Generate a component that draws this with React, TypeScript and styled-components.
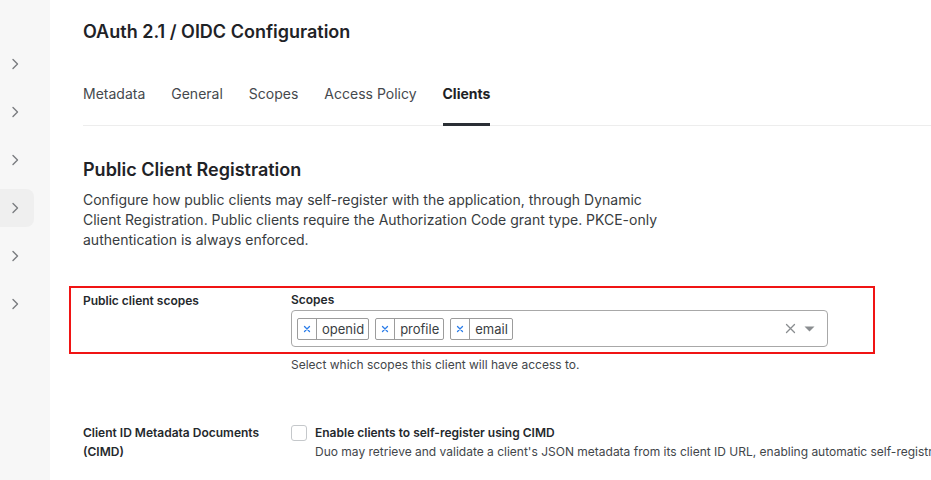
import styled, { createGlobalStyle } from "styled-components";

const GlobalStyle = createGlobalStyle`
  html, body {
    margin: 0;
    padding: 0;
    background: #ffffff;
  }
  body {
    font-family: Inter, "Noto Sans", "Liberation Sans", sans-serif;
    color: #2b2f33;
    overflow: hidden;
  }
  * {
    box-sizing: border-box;
  }
`;

const tabs = ["Metadata", "General", "Scopes", "Access Policy", "Clients"];
const scopes = ["openid", "profile", "email"];

function Chevron() {
  return (
    <svg width="16" height="16" viewBox="0 0 16 16" fill="none">
      <path d="M6 3.5l4.5 4.5L6 12.5" stroke="#7a7d80" strokeWidth="1.4" strokeLinecap="round" strokeLinejoin="round" />
    </svg>
  );
}

function RemoveIcon() {
  return (
    <svg width="8" height="8" viewBox="0 0 8 8">
      <path d="M1.5 1.5l5 5M6.5 1.5l-5 5" stroke="#2b7de9" strokeWidth="1.3" strokeLinecap="round" />
    </svg>
  );
}

function ClearIcon() {
  return (
    <svg width="11" height="11" viewBox="0 0 11 11">
      <path d="M1.5 1.5l8 8M9.5 1.5l-8 8" stroke="#8a8d90" strokeWidth="1.3" strokeLinecap="round" />
    </svg>
  );
}

function CaretIcon() {
  return (
    <svg width="11" height="6" viewBox="0 0 11 6">
      <path d="M0.5 0.5h10L5.5 5.5z" fill="#8a8d90" />
    </svg>
  );
}

function App() {
  return (
    <>
      <GlobalStyle />
      <Page>
        <Sidebar>
          {[0, 1, 2, 3, 4, 5].map((i) => (
            <NavItem key={i} active={i === 3}>
              <Chevron />
            </NavItem>
          ))}
        </Sidebar>

        <Main>
          <Title>OAuth 2.1 / OIDC Configuration</Title>

          <TabBar>
            {tabs.map((t) => (
              <Tab key={t} active={t === "Clients"}>
                {t}
              </Tab>
            ))}
          </TabBar>

          <SectionTitle>Public Client Registration</SectionTitle>
          <Description>
            Configure how public clients may self-register with the application, through Dynamic
            Client Registration. Public clients require the Authorization Code grant type. PKCE-only
            authentication is always enforced.
          </Description>

          <Highlight>
            <FormRow>
              <RowLabel>Public client scopes</RowLabel>
              <Field>
                <FieldLabel>Scopes</FieldLabel>
                <MultiSelect>
                  <ChipList>
                    {scopes.map((s) => (
                      <Chip key={s}>
                        <ChipRemove>
                          <RemoveIcon />
                        </ChipRemove>
                        <ChipText>{s}</ChipText>
                      </Chip>
                    ))}
                  </ChipList>
                  <SelectControls>
                    <ClearIcon />
                    <CaretIcon />
                  </SelectControls>
                </MultiSelect>
              </Field>
            </FormRow>
          </Highlight>
          <HelpText>Select which scopes this client will have access to.</HelpText>

          <CheckRow>
            <RowLabel>
              Client ID Metadata Documents
              <br />
              (CIMD)
            </RowLabel>
            <CheckField>
              <Checkbox />
              <CheckText>
                <CheckTitle>Enable clients to self-register using CIMD</CheckTitle>
                <CheckHint>
                  Duo may retrieve and validate a client's JSON metadata from its client ID URL, enabling automatic self-registration.
                </CheckHint>
              </CheckText>
            </CheckField>
          </CheckRow>
        </Main>
      </Page>
    </>
  );
}

const Page = styled.div`
  display: flex;
  height: 100vh;
  overflow: hidden;
`;

const Sidebar = styled.nav`
  width: 50px;
  flex-shrink: 0;
  background: #f7f7f7;
  padding-top: 45px;
  display: flex;
  flex-direction: column;
  gap: 10px;
`;

const NavItem = styled.div<{ active?: boolean }>`
  width: 34px;
  height: 38px;
  display: flex;
  align-items: center;
  padding-left: 7px;
  border-radius: 0 8px 8px 0;
  background: ${(p) => (p.active ? "#efefef" : "transparent")};
`;

const Main = styled.main`
  flex: 1;
  min-width: 0;
  padding: 20px 0 0 33px;
  overflow: hidden;
`;

const Title = styled.h1`
  margin: 0;
  font-size: 18px;
  line-height: 24px;
  font-weight: 600;
  color: #1f2327;
`;

const TabBar = styled.div`
  display: flex;
  gap: 26px;
  margin-top: 26px;
  border-bottom: 1px solid #ededed;
`;

const Tab = styled.div<{ active?: boolean }>`
  font-size: 14px;
  line-height: 20px;
  padding: 14px 0 19px;
  margin-bottom: -1px;
  font-weight: ${(p) => (p.active ? 700 : 400)};
  color: ${(p) => (p.active ? "#1d2125" : "#45494d")};
  border-bottom: 3px solid ${(p) => (p.active ? "#2a2f35" : "transparent")};
`;

const SectionTitle = styled.h2`
  margin: 32px 0 0;
  font-size: 18px;
  line-height: 24px;
  font-weight: 600;
  color: #1f2327;
`;

const Description = styled.p`
  margin: 8px 0 0;
  max-width: 580px;
  font-size: 14px;
  line-height: 20px;
  color: #383c40;
`;

const Highlight = styled.div`
  margin: 36px 0 0 -14px;
  width: 806px;
  border: 2px solid #f01414;
  padding: 3px 0 5px 12px;
`;

const FormRow = styled.div`
  display: grid;
  grid-template-columns: 208px 1fr;
`;

const RowLabel = styled.div`
  font-size: 12px;
  line-height: 19px;
  font-weight: 600;
  color: #25292d;
`;

const Field = styled.div`
  display: flex;
  flex-direction: column;
`;

const FieldLabel = styled.div`
  font-size: 12px;
  line-height: 18px;
  font-weight: 600;
  color: #25292d;
`;

const MultiSelect = styled.div`
  margin-top: 1px;
  width: 537px;
  height: 37px;
  border: 1px solid #a8a8a8;
  border-radius: 4px;
  display: flex;
  align-items: center;
  justify-content: space-between;
  padding: 0 12px 0 5px;
`;

const ChipList = styled.div`
  display: flex;
  gap: 6px;
`;

const Chip = styled.div`
  display: flex;
  align-items: stretch;
  height: 22px;
  border: 1px solid #9c9c9c;
  border-radius: 2px;
`;

const ChipRemove = styled.span`
  width: 19px;
  display: flex;
  align-items: center;
  justify-content: center;
  border-right: 1px solid #9c9c9c;
`;

const ChipText = styled.span`
  display: flex;
  align-items: center;
  padding: 0 4px 0 5px;
  font-size: 13px;
  color: #3a3e42;
`;

const SelectControls = styled.div`
  display: flex;
  align-items: center;
  gap: 8px;
`;

const HelpText = styled.div`
  margin: 2px 0 0 208px;
  font-size: 12px;
  line-height: 18px;
  color: #42464a;
`;

const CheckRow = styled.div`
  display: grid;
  grid-template-columns: 208px 1fr;
  margin-top: 49px;
`;

const CheckField = styled.div`
  display: flex;
  gap: 8px;
  min-width: 0;
`;

const Checkbox = styled.span`
  flex-shrink: 0;
  width: 16px;
  height: 16px;
  margin-top: 2px;
  border: 1px solid #c5c8cb;
  border-radius: 3px;
  background: #ffffff;
`;

const CheckText = styled.div`
  min-width: 0;
`;

const CheckTitle = styled.div`
  font-size: 12px;
  line-height: 19px;
  font-weight: 600;
  color: #25292d;
`;

const CheckHint = styled.div`
  font-size: 12px;
  line-height: 19px;
  color: #42464a;
  white-space: nowrap;
`;

export default App;
